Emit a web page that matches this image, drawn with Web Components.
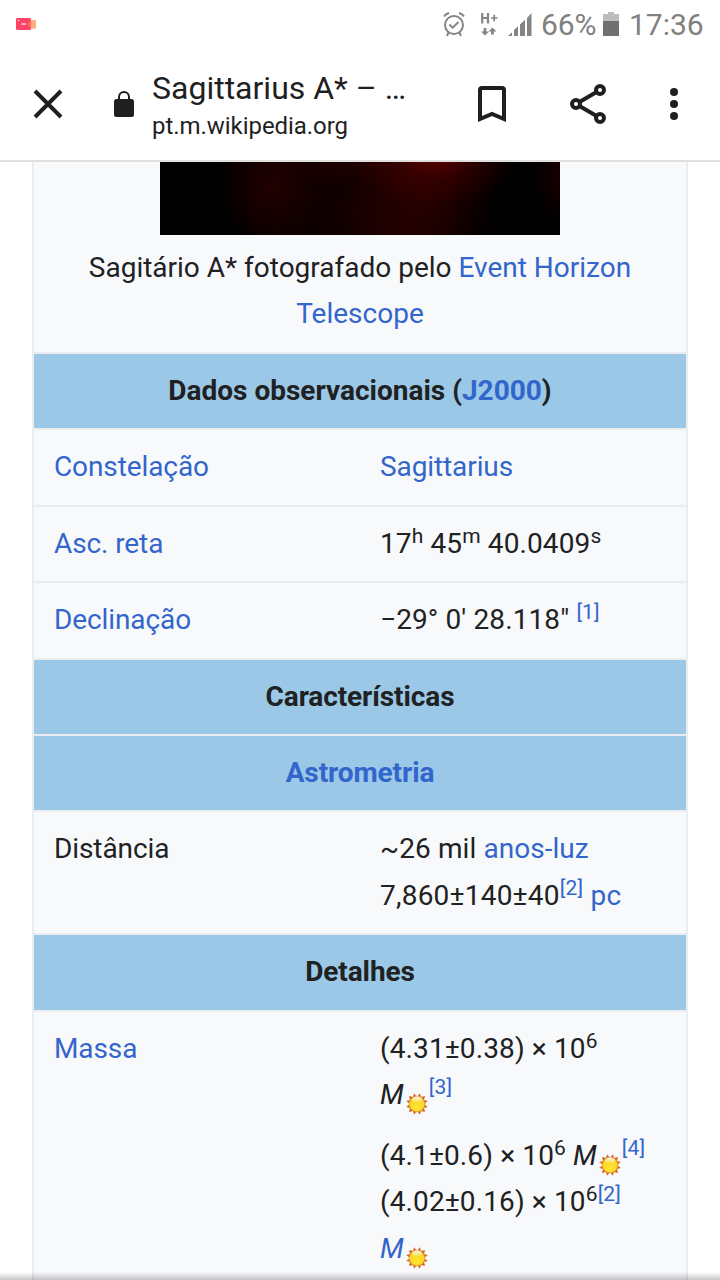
<!DOCTYPE html>
<html lang="pt">
<head>
<meta charset="utf-8">
<title>Sagittarius A*</title>
<style>
html,body{margin:0;padding:0}
body{width:720px;height:1280px;overflow:hidden;background:#fff;font-family:Roboto,sans-serif;color:#202122}
</style>
</head>
<body>
<wiki-screen></wiki-screen>
<script>
const define = (name, html) => {
  const t = document.createElement('template');
  t.innerHTML = html;
  customElements.define(name, class extends HTMLElement {
    constructor() {
      super();
      this.attachShadow({mode: 'open'}).append(t.content.cloneNode(true));
    }
  });
};

define('status-bar', `
<style>
:host{display:flex;height:50px;align-items:center;color:#808080;box-sizing:border-box;padding:0 16px}
svg{display:block;flex:none}
.cam{margin:-2px auto 0 0}
.alarm,.h,.sig,.bat{margin-bottom:2px}
.h{margin-left:15px}.sig{margin-left:9px}.bat{margin-left:6px}
span{font-size:30px;line-height:50px;white-space:nowrap}
.p{margin-left:9px;width:56px;letter-spacing:-.1px}.t{margin-left:10px;width:75px}
</style>
<svg class="cam" width="20" height="12" viewBox="0 0 20 12"><rect width="15" height="12" rx="1.3" fill="#ff4467"/><path d="M12 5.5 15.5 2h3.2Q20 2 20 3v6.500q0 1.200-1.300 1.200h-3.200L12 7z" fill="#ffad80"/><path d="M12 5.500 15 2.500v8L12 7z" fill="#ff684f"/><rect x="2" y="2" width="1.200" height="1.200" fill="#fff"/><path d="M5.500 6h4.500" stroke="#ffd0d8" stroke-width="1.500"/></svg>
<svg class="alarm" width="22" height="26" viewBox="0 0 22 26" fill="none" stroke="#858585" stroke-width="2"><circle cx="11" cy="14" r="9"/><path d="M1 5.500Q2.500 3 6 2M21 5.500Q19.500 3 16 2M5.500 21.500 4 25M16.500 21.500 18 25"/><path d="m6.500 13.500 3.200 3.200 5.800-5.700" stroke-width="2"/></svg>
<svg class="h" width="18" height="24" viewBox="0 0 18 24" fill="none" stroke="#858585"><path d="M2.200 1v10.500M8 1v10.500M2 6h6" stroke-width="2.200"/><path d="M11 6h6.500M14.200 2.800v6.500" stroke-width="1.700"/><path d="M5 16v5M12.500 22.500v-4" stroke-width="2.800"/><path d="M1 19.500h8l-4 4zM8.500 19.500h8l-4-4z" fill="#858585" stroke="none"/></svg>
<svg class="sig" width="25" height="25" viewBox="0 0 25 25" fill="#858585"><path d="m1 24 4-3.800V24zM7 18l4-3.800V24H7zM13 12.500l5-4.800V24h-5zM20 6l4.500-5v23H20z"/></svg>
<span class="p">66%</span>
<svg class="bat" width="16" height="24" viewBox="0 0 16 24"><path d="M0 2h5V0h6v2h5v8H0z" fill="#bdbdbd"/><path d="M0 9h16v15H0z" fill="#707070"/></svg>
<span class="t">17:36</span>`);

define('browser-bar', `
<style>
:host{display:grid;grid-template-columns:104px 48px 300px 80px 112px 76px;height:112px;box-sizing:border-box;border-bottom:2px solid #e0e1df;align-items:center;color:#1f1f1f}
svg{display:block;fill:none;stroke:#1f1f1f}
.x{margin-left:32px}.l{margin-left:10px}.b{margin-left:26px}.s{margin-left:38px}.d{margin-left:12px}
.title{font-size:32px;line-height:38px;white-space:nowrap}
.url{font-size:24px;line-height:30px;margin-top:4px;white-space:nowrap;letter-spacing:-.05px}
svg{margin-bottom:2px}
</style>
<svg class="x" width="32" height="32" viewBox="0 0 32 32"><path d="m3 3 26 26M29 3 3 29" stroke-width="3.900"/></svg>
<svg class="l" width="20" height="28" viewBox="0 0 20 28"><rect y="9" width="20" height="18" rx="2.500" fill="#1f1f1f" stroke="none"/><path d="M5 10V7a5 5 0 0 1 10 0v3" stroke-width="2"/></svg>
<div class="txt"><div class="title">Sagittarius A* – …</div><div class="url">pt.m.wikipedia.org</div></div>
<svg class="b" width="28" height="36" viewBox="0 0 28 36"><path d="M2 33V4q0-2 2-2h20q2 0 2 2v29l-12-5z" stroke-width="4"/></svg>
<svg class="s" width="36" height="40" viewBox="0 0 36 40"><path d="M30 6 6 20l24 14" stroke-width="4"/><g fill="#fff" stroke-width="4"><circle cx="30" cy="6" r="4"/><circle cx="6" cy="20" r="4"/><circle cx="30" cy="34" r="4"/></g></svg>
<svg class="d" width="36" height="36" viewBox="0 0 36 36"><g fill="#1f1f1f" stroke="none"><circle cx="18" cy="6" r="4"/><circle cx="18" cy="18" r="4"/><circle cx="18" cy="30" r="4"/></g></svg>`);

define('info-photo', `
<style>
:host{display:block;width:400px;height:73px;margin:0 auto;background:
radial-gradient(ellipse 85px 48px at 275px -4px,rgba(95,0,0,.85),rgba(70,0,0,.45) 45%,transparent),
radial-gradient(ellipse 78px 110px at 262px 22px,rgba(48,0,0,.8),rgba(38,0,0,.6) 50%,transparent),
radial-gradient(ellipse 60px 60px at 240px 65px,rgba(38,0,0,.7),transparent),
radial-gradient(ellipse 55px 68px at 113px 26px,rgba(36,0,0,.9),rgba(28,0,0,.7) 45%,transparent),
radial-gradient(ellipse 150px 25px at 200px 0,rgba(42,0,0,.6),transparent),
radial-gradient(ellipse 30px 48px at 402px 15px,rgba(28,0,0,.9),transparent),
radial-gradient(ellipse 110px 130px at 190px 45px,#140000,transparent),#000}
</style>`);

define('info-heading', `
<style>
:host{display:block;padding:14px 20px;border-top:2px solid #eaecf0;background:#9ac8e6;background-clip:padding-box;text-align:center;font-weight:700}
</style><slot></slot>`);

define('info-row', `
<style>
:host{display:grid;grid-template-columns:306px 1fr;column-gap:20px;padding:14px 0 14px 20px;border-top:2px solid #eaecf0}
::slotted([slot=label]){letter-spacing:-.1px}
</style><slot name="label"></slot><div><slot></slot></div>`);

define('wiki-link', `<style>:host{display:inline;color:#36c}</style><slot></slot>`);
define('text-sup', `<style>:host{display:inline;font-size:.75em;line-height:0;vertical-align:10px}</style><slot></slot>`);
define('sun-icon', `
<style>:host{display:inline-block;width:22px;height:22px;vertical-align:-11px;margin:-5px 1px 0 2px}svg{display:block}</style>
<svg width="22" height="22" viewBox="-11 -11 22 22"><defs><radialGradient id="g" cy=".72" r=".75"><stop stop-color="#ffe52c"/><stop offset=".7" stop-color="#f9d827"/><stop offset="1" stop-color="#e6a51b"/></radialGradient><linearGradient id="w" x2="0" y2="1"><stop stop-color="#fff" stop-opacity=".9"/><stop offset="1" stop-color="#fff" stop-opacity="0"/></linearGradient></defs>
<path fill="#dc6426" d="M0-7 2.900-10.800 4-7 8-8 7-4 10.800-2.900 7 0 10.800 2.900 7 4 8 8 4 7 2.900 10.800 0 7-2.900 10.800-4 7-8 8-7 4-10.800 2.900-7 0-10.800-2.900-7-4-8-8-4-7-2.900-10.800z"/><circle r="7.800" fill="url(#g)" stroke="#e09a2a" stroke-width=".7"/><ellipse cy="-4.200" rx="5.200" ry="3.200" fill="url(#w)"/></svg>`);

define('wiki-screen', `
<style>
:host{display:flex;flex-direction:column;width:720px;height:1280px;overflow:hidden;position:relative}
status-bar,browser-bar{flex:none}
main{width:652px;margin:0 auto;border:solid #eaecf0;border-width:0 2px;background:#f8f9fb;flex:1;min-height:0;overflow:hidden;font-size:28px;line-height:46.4px}
.cap{text-align:center;padding:10px 30px 14.2px}
.p2{margin-top:14.6px}
.num{letter-spacing:.12px}.wide{letter-spacing:.22px}.tight{letter-spacing:-.1px}
i{font-style:italic}
.shade{position:absolute;left:0;right:0;bottom:0;height:8px;background:linear-gradient(transparent,rgba(0,0,0,.22))}
</style>
<status-bar></status-bar>
<browser-bar></browser-bar>
<main>
<info-photo></info-photo>
<div class="cap">Sagitário A* fotografado pelo <wiki-link>Event Horizon<br>Telescope</wiki-link></div>
<info-heading>Dados observacionais (<wiki-link>J2000</wiki-link>)</info-heading>
<info-row class="tight"><wiki-link slot="label">Constelação</wiki-link><wiki-link>Sagittarius</wiki-link></info-row>
<info-row class="num"><wiki-link slot="label">Asc. reta</wiki-link>17<text-sup>h</text-sup> 45<text-sup>m</text-sup> 40.0409<text-sup>s</text-sup></info-row>
<info-row class="num"><wiki-link slot="label">Declinação</wiki-link>−29° 0' 28.118" <text-sup><wiki-link>[1]</wiki-link></text-sup></info-row>
<info-heading class="tight">Características</info-heading>
<info-heading class="tight"><wiki-link>Astrometria</wiki-link></info-heading>
<info-row><span slot="label">Distância</span><span class="num">~26 mil </span><wiki-link>anos-luz</wiki-link><br><span class="wide">7,860±140±40<text-sup><wiki-link>[2]</wiki-link></text-sup> <wiki-link>pc</wiki-link></span></info-row>
<info-heading class="tight">Detalhes</info-heading>
<info-row class="num"><wiki-link slot="label">Massa</wiki-link><div>(4.31±0.38) × 10<text-sup>6</text-sup><br><i>M</i><sun-icon></sun-icon><text-sup><wiki-link>[3]</wiki-link></text-sup></div><div class="p2">(4.1±0.6) × 10<text-sup>6</text-sup> <i>M</i><sun-icon></sun-icon><text-sup><wiki-link>[4]</wiki-link></text-sup><br>(4.02±0.16) × 10<text-sup>6<wiki-link>[2]</wiki-link></text-sup><br><wiki-link><i>M</i></wiki-link><sun-icon></sun-icon></div></info-row>
</main>
<div class="shade"></div>`);
</script>
</body>
</html>
